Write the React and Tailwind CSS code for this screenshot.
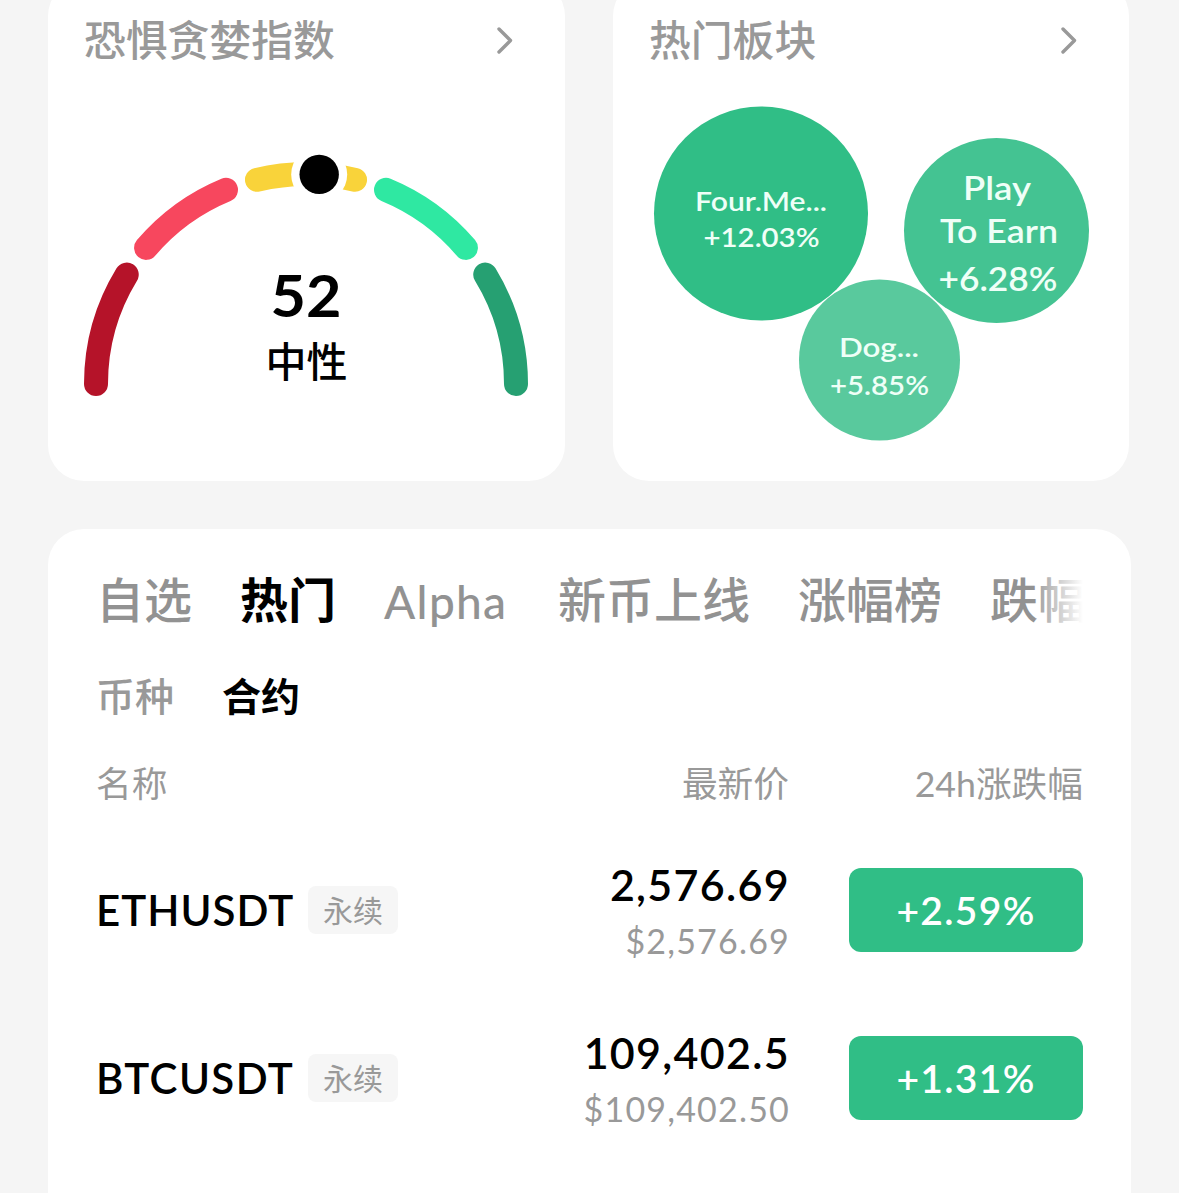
import { useState } from 'react'
import clsx from 'clsx'

const SEGMENTS = [
  { from: 180, to: 148.6, color: '#b51329' },
  { from: 139.6, to: 112.4, color: '#f7475e' },
  { from: 103.5, to: 76.5, color: '#f9d33a' },
  { from: 67.6, to: 40.4, color: '#2fe8a2' },
  { from: 31.4, to: 0, color: '#26a072' },
]

const BUBBLES = [
  {
    cx: 112, cy: 117.5, r: 107, color: '#30be86', size: 27.5,
    lines: [
      { text: 'Four.Me...', x: 112, y: 114.5, width: 132 },
      { text: '+12.03%', x: 112.5, y: 151, width: 116 },
    ],
  },
  {
    cx: 347.5, cy: 134.5, r: 92.5, color: '#44c392', size: 33.5,
    lines: [
      { text: 'Play', x: 348, y: 103.5, width: 68 },
      { text: 'To Earn', x: 350, y: 146.5, width: 118 },
      { text: '+6.28%', x: 349, y: 195, width: 119 },
    ],
  },
  {
    cx: 230.5, cy: 264, r: 80.5, color: '#59c99d', size: 27.5,
    lines: [
      { text: 'Dog...', x: 230, y: 261, width: 80 },
      { text: '+5.85%', x: 230.5, y: 298.5, width: 99 },
    ],
  },
]

const TABS = ['自选', '热门', 'Alpha', '新币上线', '涨幅榜', '跌幅榜']
const SUB_TABS = ['币种', '合约']

const ROWS = [
  { symbol: 'ETHUSDT', price: '2,576.69', usd: '$2,576.69', change: '+2.59%' },
  { symbol: 'BTCUSDT', price: '109,402.5', usd: '$109,402.50', change: '+1.31%' },
]

const polar = (deg, r = 210) => {
  const a = (deg * Math.PI) / 180
  return [222 + r * Math.cos(a), 244 - r * Math.sin(a)]
}

function Chevron() {
  return (
    <svg className="w-5 h-7 shrink-0" viewBox="0 0 20 28" fill="none">
      <path d="M4 3L15.5 14.5L4 26" stroke="#999" strokeWidth="3.4" strokeLinecap="round" strokeLinejoin="round" />
    </svg>
  )
}

function Card({ title, children }) {
  return (
    <section className="bg-white rounded-[36px] pt-[30px] px-9 overflow-hidden">
      <header className="flex items-center justify-between h-[60px] pr-3.5">
        <h2 className="text-[41.8px] leading-[60px] font-medium text-[#999]">{title}</h2>
        <Chevron />
      </header>
      {children}
    </section>
  )
}

function Gauge({ value, label }) {
  const [kx, ky] = polar(180 - value * 1.8)
  return (
    <svg className="block w-[444px] h-[260px] mt-[70px]" viewBox="0 0 444 260">
      {SEGMENTS.map(({ from, to, color }) => (
        <path
          key={from}
          d={`M${polar(from).join(' ')}A210 210 0 0 1 ${polar(to).join(' ')}`}
          stroke={color}
          strokeWidth="24"
          strokeLinecap="round"
          fill="none"
        />
      ))}
      <circle cx={kx} cy={ky} r="28" fill="#fff" />
      <circle cx={kx} cy={ky} r="19.7" fill="#000" />
      <text
        x="222"
        y="177"
        textAnchor="middle"
        className="text-[57px] font-bold"
        textLength="71"
        lengthAdjust="spacingAndGlyphs"
      >
        {value}
      </text>
      <text x="222.5" y="237" textAnchor="middle" className="text-[41px] font-medium">{label}</text>
    </svg>
  )
}

function Bubbles() {
  return (
    <svg className="block w-[444px] h-[360px] mt-[26px]" viewBox="0 0 444 360">
      {BUBBLES.map(b => (
        <g key={b.cx}>
          <circle cx={b.cx} cy={b.cy} r={b.r} fill={b.color} />
          {b.lines.map(line => (
            <text
              key={line.text}
              x={line.x}
              y={line.y}
              fontSize={b.size}
              textLength={line.width}
              lengthAdjust="spacingAndGlyphs"
              textAnchor="middle"
              fill="#effff7"
              className="font-semibold"
            >
              {line.text}
            </text>
          ))}
        </g>
      ))}
    </svg>
  )
}

function App() {
  const [tab, setTab] = useState('热门')
  const [subTab, setSubTab] = useState('合约')

  return (
    <div className="w-[1179px] h-[1193px] overflow-hidden bg-[#f5f5f5] text-black pl-12 pr-[49px] font-[Lato,'Noto_Sans_CJK_SC',sans-serif]">
      <div className="grid grid-cols-[517px_516px] gap-12 h-[501px] -mt-5">
        <Card title="恐惧贪婪指数">
          <Gauge value={52} label="中性" />
        </Card>
        <Card title="热门板块">
          <Bubbles />
        </Card>
      </div>

      <section className="mt-12 w-[1083px] h-[720px] bg-white rounded-[36px] px-12 pt-[35px]">
        <nav className="relative flex gap-12 h-[72px] overflow-hidden">
          {TABS.map(name => (
            <button
              key={name}
              onClick={() => setTab(name)}
              className={clsx(
                'shrink-0 leading-[72px] whitespace-nowrap',
                name === 'Alpha' ? 'w-[126px] pt-0.5 text-left text-[46px] tracking-[1.3px]' : 'text-[48px]',
                tab === name ? 'font-bold text-black' : 'font-medium text-[#929292]'
              )}
            >
              {name}
            </button>
          ))}
          <div className="absolute right-0 top-0 w-12 h-full bg-linear-to-r from-white/10 to-white" />
        </nav>

        <div className="flex gap-12 mt-6 h-[72px]">
          {SUB_TABS.map(name => (
            <button
              key={name}
              onClick={() => setSubTab(name)}
              className={clsx(
                'text-[39px] leading-[72px]',
                subTab === name ? 'font-bold text-black' : 'font-medium text-[#999]'
              )}
            >
              {name}
            </button>
          ))}
        </div>

        <div className="grid grid-cols-[1fr_300px_294px] mt-5 h-[64px] text-[35.7px] leading-[64px] text-[#999]">
          <span>名称</span>
          <span className="text-right">最新价</span>
          <span className="text-right">24h涨跌幅</span>
        </div>

        {ROWS.map(row => (
          <div key={row.symbol} className="grid grid-cols-[1fr_300px_294px] items-center h-[168px] pt-5">
            <div className="flex items-center">
              <span
                className={clsx(
                  'w-[212px] text-[42px] leading-[48px] font-semibold',
                  row.symbol === 'ETHUSDT' ? 'tracking-[1px]' : 'tracking-[1.4px]'
                )}
              >
                {row.symbol}
              </span>
              <span className="w-[90px] h-12 rounded-lg bg-[#f6f6f6] text-center text-[30px] leading-[48px] text-[#999]">永续</span>
            </div>
            <div className="flex flex-col text-right pt-[5px]">
              <span className="text-[43px] leading-[56px] font-semibold tracking-[1.3px] -mr-px">{row.price}</span>
              <span className="text-[34px] leading-[56px] text-[#999] tracking-[1.2px] -mr-px">{row.usd}</span>
            </div>
            <div className="flex justify-end">
              <span className="w-[234px] h-[84px] rounded-xl bg-[#30be86] text-white text-center text-[39px] leading-[84px] font-semibold tracking-[1.3px]">
                {row.change}
              </span>
            </div>
          </div>
        ))}
      </section>
    </div>
  )
}

export default App
